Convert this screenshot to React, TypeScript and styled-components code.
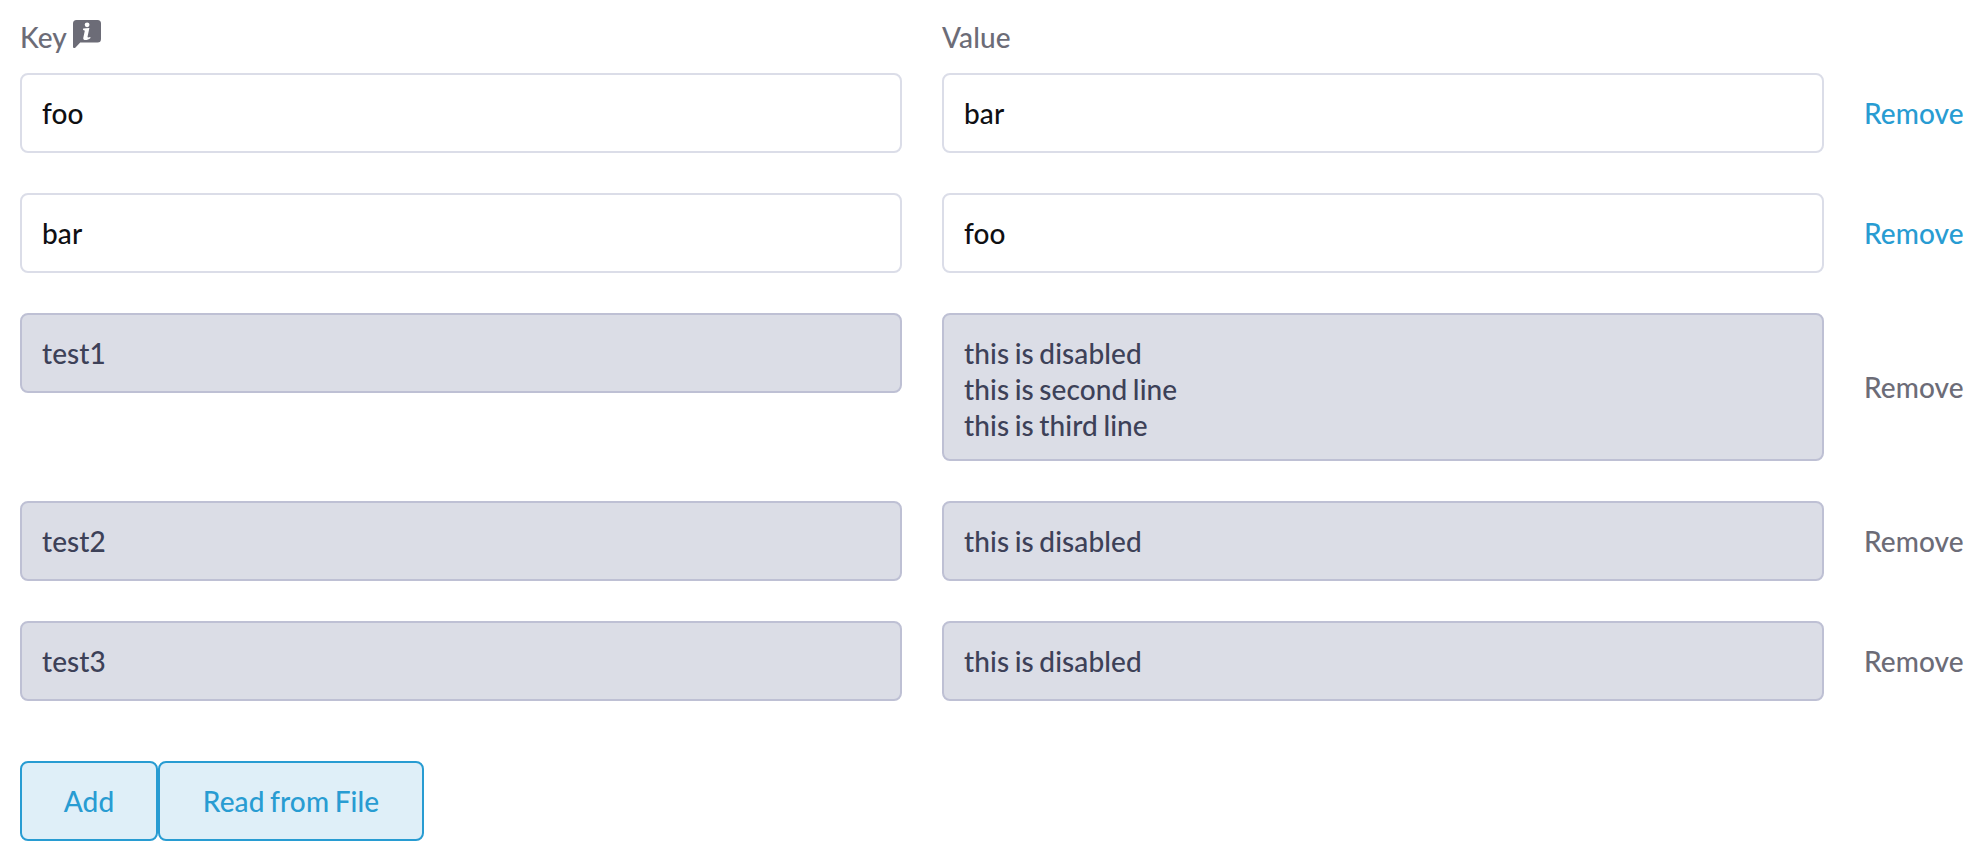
import React from "react";
import styled, { createGlobalStyle } from "styled-components";

const GlobalStyle = createGlobalStyle`
  * { box-sizing: border-box; }
  body {
    margin: 0;
    background: #fff;
    color: #6c6c77;
    font: 500 28px/36px Lato, sans-serif;
    letter-spacing: 0.1px;
    word-spacing: -1.7px;
  }
`;

const Page = styled.main`
  padding: 19px 20px 20px;
`;

const Grid = styled.div`
  display: grid;
  grid-template-columns: 882px 882px 1fr;
  column-gap: 40px;
  row-gap: 40px;
`;

const Header = styled(Grid)`
  height: 54px;
`;

const Label = styled.div`
  display: flex;
  align-items: flex-start;
  gap: 6px;
`;

const InfoIcon = styled.svg`
  flex: none;
  width: 28px;
  height: 28px;
  margin-top: 1px;
`;

const Field = styled.div<{ $disabled?: boolean }>`
  align-self: start;
  min-height: 80px;
  padding: 20px 20px 16px;
  border: 2px solid ${p => (p.$disabled ? "#bec0d4" : "#dbdde8")};
  border-radius: 8px;
  background: ${p => (p.$disabled ? "#dbdde6" : "#fff")};
  color: ${p => (p.$disabled ? "#3d4158" : "#0f0f13")};
  white-space: pre-line;
`;

const Remove = styled.button<{ $disabled?: boolean }>`
  align-self: center;
  padding: 0;
  border: 0;
  background: none;
  color: ${p => (p.$disabled ? "#6c6c77" : "#289cd2")};
  font: inherit;
  letter-spacing: 0.1px;
  text-align: left;
`;

const Actions = styled.div`
  display: flex;
  margin-top: 60px;
`;

const Action = styled.button<{ $width: number }>`
  width: ${p => p.$width}px;
  height: 80px;
  padding: 0;
  border: 2px solid #289cd2;
  border-radius: 8px;
  background: #dfeff8;
  color: #289cd2;
  font: inherit;
  letter-spacing: 0.1px;
  word-spacing: -1.6px;
`;

const rows = [
  { name: "foo", value: "bar" },
  { name: "bar", value: "foo" },
  { name: "test1", value: "this is disabled\nthis is second line\nthis is third line", disabled: true },
  { name: "test2", value: "this is disabled", disabled: true },
  { name: "test3", value: "this is disabled", disabled: true },
];

export default function App() {
  return (
    <Page>
      <GlobalStyle />
      <Header>
        <Label>
          Key
          <InfoIcon viewBox="0 0 28 28" aria-hidden="true">
            <path
              d="M3.5 0h21A3.5 3.5 0 0 1 28 3.5v15.4a3.5 3.5 0 0 1-3.5 3.5H7.2l-4.7 5C1.5 28.5 0 28 0 26.7V3.5A3.5 3.5 0 0 1 3.5 0z"
              fill="#6c6c77"
            />
            <circle cx="14.1" cy="4.8" r="2.4" fill="#fff" />
            <path
              d="M10.2 8.6l6.2-.6-1.8 8.6c-.2 1 .4 1.2 2.7.4l.2.9c-1.7 1.5-3.4 2.1-4.8 2.1-1.9 0-2.7-.9-2.4-2.3l1.4-6.4c.2-1-.1-1.2-1.7-1.4z"
              fill="#fff"
            />
          </InfoIcon>
        </Label>
        <Label>Value</Label>
      </Header>
      <Grid>
        {rows.map(row => (
          <React.Fragment key={row.name}>
            <Field $disabled={row.disabled}>{row.name}</Field>
            <Field $disabled={row.disabled}>{row.value}</Field>
            <Remove $disabled={row.disabled} disabled={row.disabled}>Remove</Remove>
          </React.Fragment>
        ))}
      </Grid>
      <Actions>
        <Action $width={138}>Add</Action>
        <Action $width={266}>Read from File</Action>
      </Actions>
    </Page>
  );
}
